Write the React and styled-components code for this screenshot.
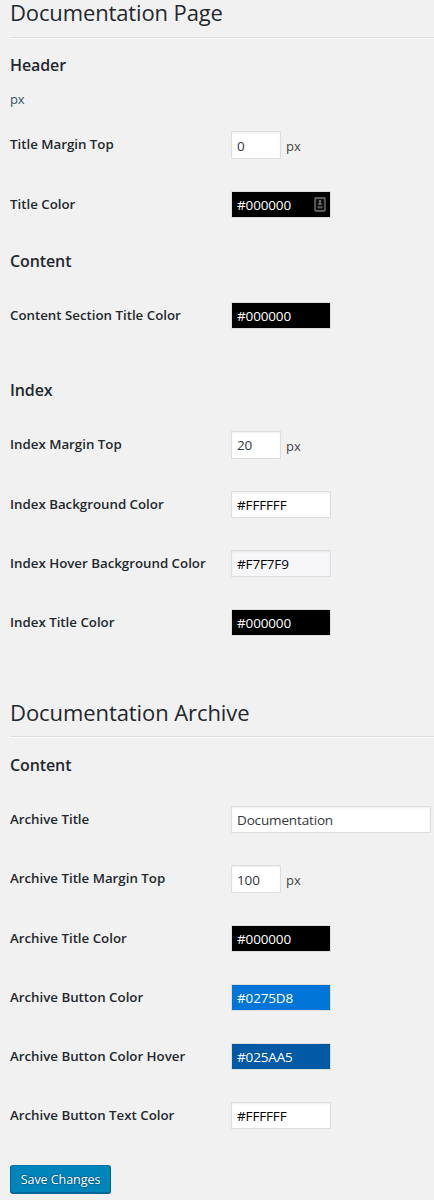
import React from "react";
import styled, { createGlobalStyle } from "styled-components";

const GlobalStyle = createGlobalStyle`
  * { box-sizing: border-box; }
  html, body { margin: 0; background: #f1f1f1; }
  body {
    font-family: "Open Sans", "Noto Sans", sans-serif;
    font-size: 13px;
    color: #444;
  }
`;

const Page = styled.form`
  display: flex;
  flex-direction: column;
  align-items: stretch;
  height: 1200px;
  padding-left: 10px;
`;

const SectionTitle = styled.h2`
  margin: ${(p) => p.$top || 0}px 0 9px;
  height: 28px;
  line-height: ${(p) => (p.$top ? 27 : 25)}px;
  font-size: 22px;
  font-weight: 400;
  letter-spacing: ${(p) => (p.$top ? -0.08 : -0.13)}px;
  color: #23282d;
  white-space: nowrap;
`;

const Rule = styled.hr`
  width: 100%;
  margin: 0;
  border: 0;
  border-top: 1px solid #ddd;
  border-bottom: 1px solid #fafafa;
`;

const GroupTitle = styled.h3`
  margin: ${(p) => p.$top}px 0 ${(p) => (p.$bottom === undefined ? 14 : p.$bottom)}px;
  height: 22px;
  line-height: 22px;
  font-size: 16px;
  font-weight: 550;
  letter-spacing: -0.1px;
  color: #23282d;
`;

const Note = styled.p`
  margin: 14px 0 5px;
  height: 20px;
  line-height: 19px;
  font-size: 13px;
  letter-spacing: -0.3px;
  color: #34526b;
`;

const Row = styled.div`
  display: grid;
  grid-template-columns: 221px 1fr;
  align-items: center;
  padding: 16px 0;
`;

const Label = styled.label`
  font-size: 13.3px;
  line-height: 18px;
  font-weight: 550;
  letter-spacing: -0.01px;
  color: #23282d;
  white-space: nowrap;
  padding-bottom: ${(p) => (p.$raised ? 2 : 1)}px;
`;

const Control = styled.div`
  display: flex;
  align-items: center;
  gap: 5px;
`;

const Field = styled.input`
  display: block;
  margin: 0;
  width: ${(p) => p.$width}px;
  height: ${(p) => p.$height || 27}px;
  padding: ${(p) => p.$drop || 0}px 5px 0;
  border: 1px solid #ddd;
  border-radius: 0;
  box-shadow: inset 0 1px 2px rgba(0, 0, 0, 0.07);
  background: ${(p) => p.$bg || "#fff"};
  color: ${(p) => p.$ink || "#32373c"};
  font: inherit;
  font-size: 13.5px;
  letter-spacing: -0.15px;
  outline: 0;
`;

const Unit = styled.span`
  line-height: 18px;
  padding-top: 2px;
`;

const FieldWrap = styled.div`
  position: relative;
`;

const ContactIcon = styled.svg`
  position: absolute;
  right: 4px;
  top: 6px;
`;

const SaveButton = styled.button`
  align-self: flex-start;
  margin: 20px 0 0;
  width: 101px;
  height: 29px;
  padding: 0 0 1px;
  border: 1px solid #006799;
  border-color: #0073aa #006799 #006799;
  border-radius: 3px;
  box-shadow: inset 0 -1px 0 #006799;
  background: #0085ba;
  color: #fff;
  font: inherit;
  font-size: 12.5px;
  letter-spacing: -0.05px;
  text-shadow: 0 -1px 1px #006799, 1px 0 1px #006799, 0 1px 1px #006799, -1px 0 1px #006799;
  white-space: nowrap;
`;

function NumberRow({ label, value, drop }) {
  return (
    <Row>
      <Label $raised>{label}</Label>
      <Control>
        <Field $width={50} $height={28} $drop={drop} defaultValue={value} />
        <Unit>px</Unit>
      </Control>
    </Row>
  );
}

function ColorRow({ label, value, ink = "#fff", autofill }) {
  return (
    <Row>
      <Label>{label}</Label>
      <Control>
        <FieldWrap>
          <Field $width={100} $bg={value} $ink={ink} defaultValue={value} />
          {autofill && (
            <ContactIcon width="13" height="16" viewBox="0 0 13 16">
              <rect x="1" y="1" width="10" height="13" rx="0.8" fill="#111" stroke="#777" strokeWidth="1.3" />
              <path d="M6 3v5" stroke="#888" strokeWidth="1.5" />
              <path d="M4.2 7h3.6" stroke="#666" strokeWidth="1.6" />
              <path d="M3.5 10.2h5" stroke="#555" strokeWidth="2" />
            </ContactIcon>
          )}
        </FieldWrap>
      </Control>
    </Row>
  );
}

export default function App() {
  return (
    <>
      <GlobalStyle />
      <Page>
        <SectionTitle>Documentation Page</SectionTitle>
        <Rule />
        <GroupTitle $top={15} $bottom={0}>Header</GroupTitle>
        <Note>px</Note>
        <NumberRow label="Title Margin Top" value="0" drop={2} />
        <ColorRow label="Title Color" value="#000000" autofill />

        <GroupTitle $top={16}>Content</GroupTitle>
        <ColorRow label="Content Section Title Color" value="#000000" />

        <GroupTitle $top={34}>Index</GroupTitle>
        <NumberRow label="Index Margin Top" value="20" />
        <ColorRow label="Index Background Color" value="#FFFFFF" ink="#000" />
        <ColorRow label="Index Hover Background Color" value="#F7F7F9" ink="#000" />
        <ColorRow label="Index Title Color" value="#000000" />

        <SectionTitle $top={47}>Documentation Archive</SectionTitle>
        <Rule />
        <GroupTitle $top={16}>Content</GroupTitle>
        <Row>
          <Label>Archive Title</Label>
          <Control>
            <Field $width={200} defaultValue="Documentation" />
          </Control>
        </Row>
        <NumberRow label="Archive Title Margin Top" value="100" drop={2} />
        <ColorRow label="Archive Title Color" value="#000000" />
        <ColorRow label="Archive Button Color" value="#0275D8" />
        <ColorRow label="Archive Button Color Hover" value="#025AA5" />
        <ColorRow label="Archive Button Text Color" value="#FFFFFF" ink="#000" />
        <SaveButton type="button">Save Changes</SaveButton>
      </Page>
    </>
  );
}
